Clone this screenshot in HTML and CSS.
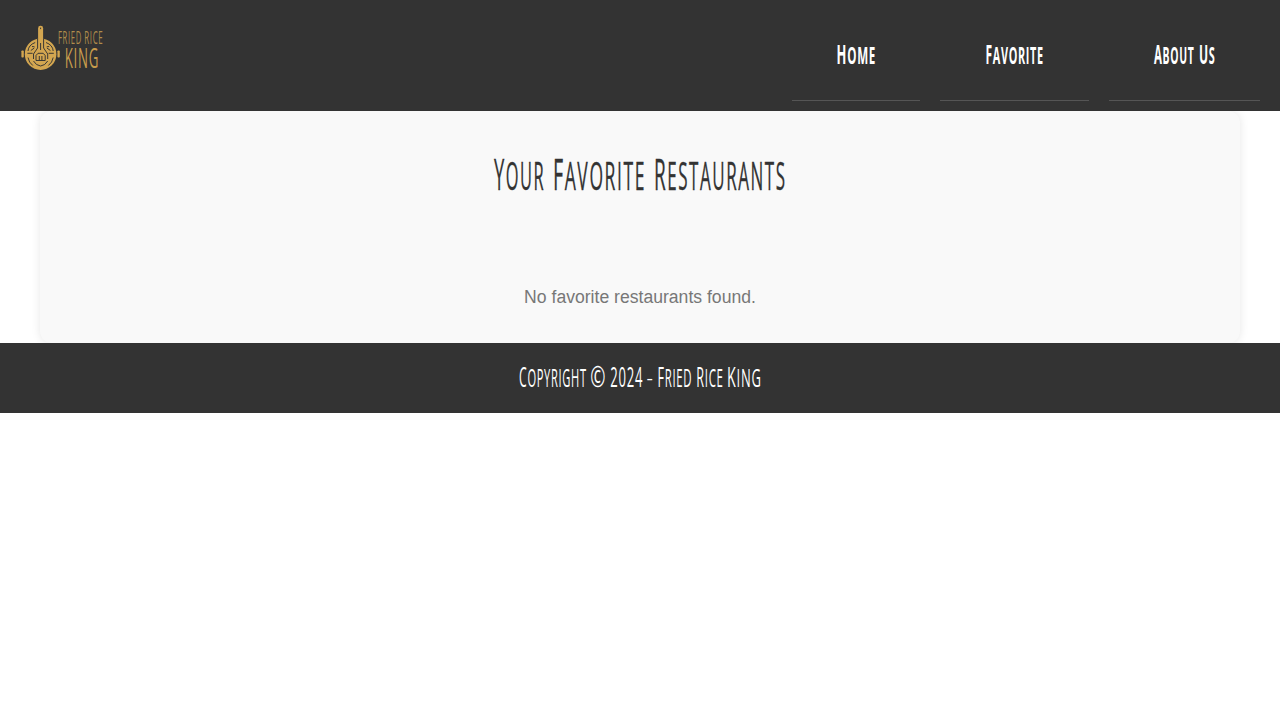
FILE: index.html
```html
<!DOCTYPE html>
<html lang="en">
<head>
<meta charset="utf-8">
<title>Fried Rice King</title>
<link rel="stylesheet" href="styles.css">
</head>
<body>
<header class="header">
  <svg class="logo" width="84" height="48" viewBox="20 24 84 48">
    <g class="gold">
      <circle cx="40.6" cy="54.2" r="15.8"/>
      <rect x="38.1" y="25.8" width="5" height="16" rx="2.4"/>
      <rect x="21.4" y="50.4" width="2.4" height="7.2" rx=".8"/>
      <rect x="57.4" y="50.4" width="2.4" height="7.2" rx=".8"/>
    </g>
    <g class="cut">
      <path d="M40.6 27.6v1.5M37.6 38.5V48L33.5 54v5M43.6 38.5V48l4.100 6v5"/>
      <path d="M40.600 43v7M33.500 61q2.500 4.500 7.100 5 4.600-.5 7.100-5M36 60.500v-5l2-2.200h5.200l2 2.200v5zM39.300 56v4M41.900 56v4"/>
      <path d="M28 51q.5-6 7.200-8.500M53.200 51q-.5-6-7.200-8.500M27.400 53.300h5.200M48.600 53.300h5.200M28 57.500q.8 5 4.800 8M53.200 57.500q-.8 5-4.800 8"/>
      <path d="M30.800 50.500l3.500-2.500M32 46.500l2.500.3M50.400 50.500l-3.500-2.500M49.200 46.500l-2.500.3"/>
    </g>
    <text class="mark" font-size="17.5" x="58" y="43.8" textLength="24" lengthAdjust="spacingAndGlyphs">FRIED</text>
    <text class="mark" font-size="17.5" x="84.2" y="43.8" textLength="19.2" lengthAdjust="spacingAndGlyphs">RICE</text>
    <text class="mark king" font-size="27" x="64.7" y="68.2" textLength="34.4" lengthAdjust="spacingAndGlyphs">KING</text>
  </svg>
  <nav class="nav">
    <a class="link"><svg width="38" height="30" viewBox="0 0 38 30"><text y="24" x="-.4" textLength="39.5" lengthAdjust="spacingAndGlyphs"><tspan class="cap">H</tspan>ome</text></svg></a>
    <a class="link"><svg width="59" height="30" viewBox="0 0 59 30"><text y="24" x=".5" textLength="58.3" lengthAdjust="spacingAndGlyphs"><tspan class="cap">F</tspan>avorite</text></svg></a>
    <a class="link"><svg width="61" height="30" viewBox="0 0 61 30"><text y="24" x="0" textLength="40.4" lengthAdjust="spacingAndGlyphs"><tspan class="cap">A</tspan>bout</text><text y="24" x="45" textLength="16.5" lengthAdjust="spacingAndGlyphs"><tspan class="cap">U</tspan>s</text></svg></a>
  </nav>
</header>
<main class="main">
  <h1 class="title"><svg width="300" height="50" viewBox="490 150 300 50">
    <text x="494" y="190" textLength="51" lengthAdjust="spacingAndGlyphs"><tspan class="cap">Y</tspan>our</text>
    <text x="553" y="190" textLength="93" lengthAdjust="spacingAndGlyphs"><tspan class="cap">F</tspan>avorite</text>
    <text x="654" y="190" textLength="132.5" lengthAdjust="spacingAndGlyphs"><tspan class="cap">R</tspan>estaurants</text>
  </svg></h1>
  <p class="empty">No favorite restaurants found.</p>
</main>
<footer class="footer">
  <svg width="250" height="40" viewBox="515 358 250 40">
    <text x="519" y="387" textLength="67.8" lengthAdjust="spacingAndGlyphs"><tspan class="cap">C</tspan>opyright</text>
    <text class="copy" x="590.3" y="386.5" textLength="15.2" lengthAdjust="spacingAndGlyphs">©</text>
    <text class="cap" x="610.3" y="387" textLength="32.8" lengthAdjust="spacingAndGlyphs">2024</text>
    <text class="cap light" x="646.5" y="387" textLength="7.5" lengthAdjust="spacingAndGlyphs">-</text>
    <text x="657.5" y="387" textLength="34.8" lengthAdjust="spacingAndGlyphs"><tspan class="cap">F</tspan>ried</text>
    <text x="696.3" y="387" textLength="27.4" lengthAdjust="spacingAndGlyphs"><tspan class="cap">R</tspan>ice</text>
    <text x="727" y="387" textLength="34.7" lengthAdjust="spacingAndGlyphs"><tspan class="cap">K</tspan>ing</text>
  </svg>
</footer>
</body>
</html>
```
FILE: styles.css
```css
* { box-sizing: border-box; }
body { margin: 0; background: #fff; font-family: "Liberation Sans", Arial, sans-serif; }
svg { display: block; overflow: visible; }
svg text { font-family: "Open Sans", "Noto Sans", sans-serif; text-transform: uppercase; letter-spacing: 1.5px; }
.header { position: relative; height: 111px; padding: 0 20px; display: flex; justify-content: space-between; align-items: flex-start; background: #333; }
.logo { margin-top: 24px; }
.gold { fill: #d3a650; }
.cut { fill: none; stroke: #333; stroke-width: .95; }
svg .mark { fill: #b08d4c; font-weight: 400; }
svg .king { fill: #c79c4c; }
.nav { display: flex; gap: 20px; padding-top: 10px; }
.link { height: 91px; padding: 30px 45px 0; border-bottom: 1px solid #555; }
.link text { fill: #fff; font-size: 24px; font-weight: 700; }
.link .cap { font-size: 26.6px; }
.main { width: 1200px; height: 232px; margin: 0 auto; padding-top: 39px; background: #f9f9f9; border-radius: 12px; box-shadow: 0 0 10px rgba(0, 0, 0, .1); text-align: center; }
.title { margin: 0; height: 50px; display: flex; justify-content: center; }
.title text { fill: #333; stroke: #333; stroke-width: .35px; font-size: 38.8px; font-weight: 400; letter-spacing: 3.5px; }
.title .cap { font-size: 43.5px; }
.empty { margin: 86px 0 0; font-size: 17.6px; line-height: 22px; color: #777; }
.footer { position: relative; height: 70px; padding-top: 15px; display: flex; justify-content: center; background: #333; }
.footer text { fill: #fff; font-size: 24.6px; font-weight: 400; }
.footer .cap { font-size: 27px; }
.footer .copy { font-size: 30px; letter-spacing: 0; }
.footer .light { font-weight: 300; }
```
